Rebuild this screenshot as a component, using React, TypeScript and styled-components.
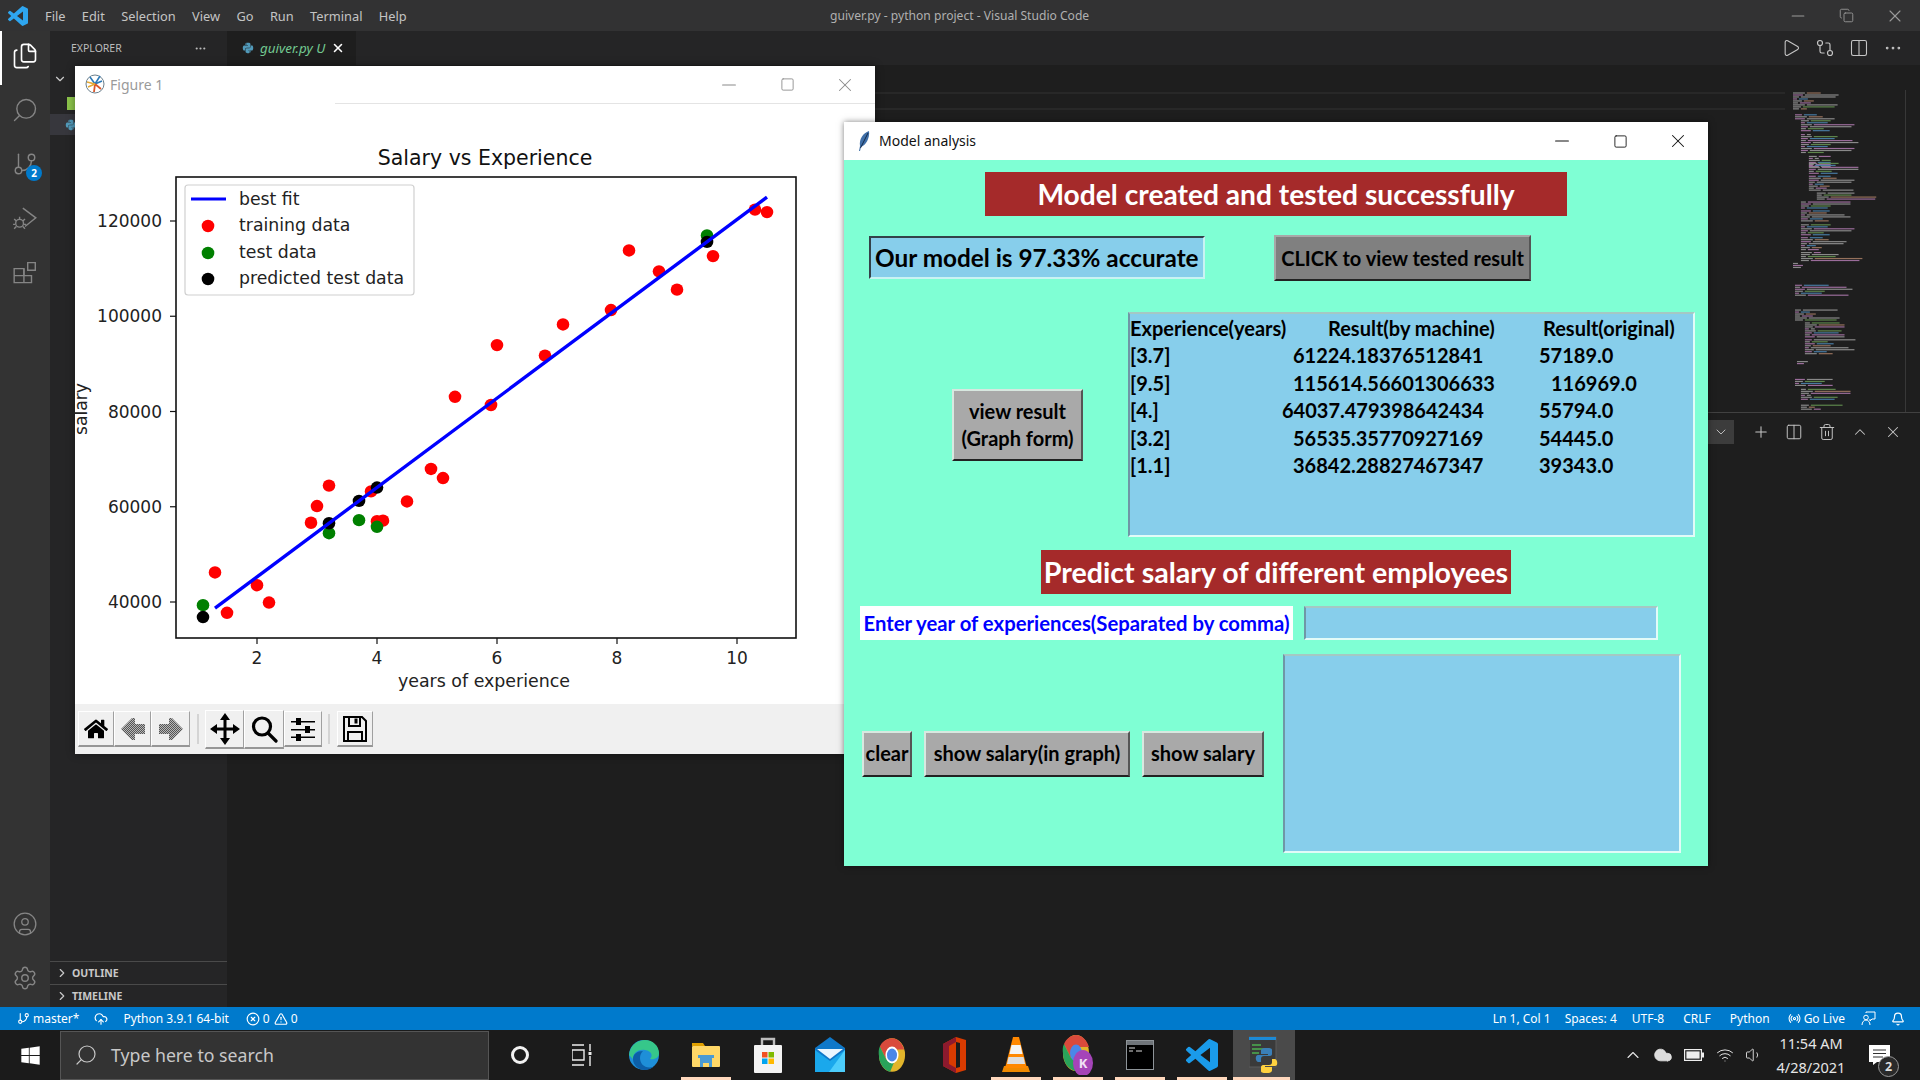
import * as React from 'react'
import styled, { createGlobalStyle } from 'styled-components'
import {
  Files, Search, GitBranch, CircleUser, Settings, Play, GitCompare, Columns2, Ellipsis,
  ChevronDown, ChevronRight, ChevronUp, Plus, Trash2, X, Minus, Square, Copy,
  UploadCloud, CircleX, TriangleAlert, Radio, Bell, Wifi, Volume1, Cloud,
} from 'lucide-react'
import { FaHome, FaPython, FaWindows } from 'react-icons/fa'

const GlobalStyle = createGlobalStyle`
  html, body {
    margin: 0;
    padding: 0;
    background: #1e1e1e;
    overflow: hidden;
  }
  * { box-sizing: border-box; }
`

const UI_FONT = '"Noto Sans", "Open Sans", sans-serif'
const TK_FONT = 'Lato, "Noto Sans", sans-serif'

const Desktop = styled.div`
  position: relative;
  width: 1920px;
  height: 1080px;
  display: flex;
  flex-direction: column;
  overflow: hidden;
  font-family: ${UI_FONT};
  color: #ccc;
`

/* ---------- vs code chrome ---------- */

const TitleBar = styled.div`
  position: relative;
  height: 31px;
  flex: none;
  display: flex;
  align-items: center;
  background: #323233;
`

const AppLogo = styled.svg`
  width: 20px;
  height: 20px;
  margin-left: 8px;
  margin-right: 17px;
`

const Menu = styled.div`
  display: flex;
  gap: 16.4px;
  font-size: 12.8px;
  color: #c4c4c4;
`

const WindowTitle = styled.div`
  position: absolute;
  left: 830px;
  top: 7px;
  font-size: 12.1px;
  color: #b0b0b0;
`

const ChromeControls = styled.div`
  margin-left: auto;
  margin-right: 15px;
  display: flex;
  align-items: center;
  gap: 31px;
  color: #9a9a9a;
`

const Workbench = styled.div`
  flex: 1;
  display: flex;
  min-height: 0;
`

const ActivityBar = styled.div`
  width: 50px;
  flex: none;
  display: flex;
  flex-direction: column;
  align-items: center;
  padding-bottom: 2px;
  background: #333333;
  color: #858585;
`

const ActivityItem = styled.div<{ $active?: boolean }>`
  position: relative;
  width: 50px;
  height: 54px;
  display: flex;
  align-items: ${p => (p.$active ? 'flex-start' : 'center')};
  padding-top: ${p => (p.$active ? 11 : 0)}px;
  justify-content: center;
  color: ${p => (p.$active ? '#fff' : '#858585')};
  border-left: 2px solid ${p => (p.$active ? '#fff' : 'transparent')};
  padding-right: 2px;
`

const ActivityBadge = styled.span`
  position: absolute;
  left: 24px;
  top: 26px;
  width: 16px;
  height: 16px;
  border-radius: 50%;
  background: #007acc;
  color: #fff;
  font-size: 10px;
  font-weight: 700;
  line-height: 16px;
  text-align: center;
`

const ActivitySpacer = styled.div`
  flex: 1;
`

const SideBar = styled.div`
  width: 177px;
  flex: none;
  display: flex;
  flex-direction: column;
  background: #252526;
`

const SideHeader = styled.div`
  height: 34px;
  flex: none;
  display: flex;
  align-items: center;
  justify-content: space-between;
  padding: 0 20px 0 21px;
  font-size: 10.5px;
  color: #bbb;
`

const TreeRow = styled.div<{ $active?: boolean; $top: number }>`
  height: 21px;
  flex: none;
  margin-top: ${p => p.$top}px;
  display: flex;
  align-items: center;
  padding-left: ${p => (p.$active ? 15 : 3)}px;
  background: ${p => (p.$active ? '#37373d' : 'transparent')};
`

const FileChip = styled.span`
  width: 9px;
  height: 13px;
  margin-left: 14px;
  background: #8bc34a;
`

const SideFill = styled.div`
  flex: 1;
`

const SideSection = styled.div`
  height: 23px;
  flex: none;
  display: flex;
  align-items: center;
  gap: 3px;
  padding-left: 5px;
  border-top: 1px solid #4a4a4a;
  font-size: 10.5px;
  font-weight: 700;
  color: #c8c8c8;
`

const EditorArea = styled.div`
  flex: 1;
  display: flex;
  flex-direction: column;
  min-width: 0;
  background: #1e1e1e;
`

const TabStrip = styled.div`
  height: 34px;
  flex: none;
  display: flex;
  background: #252526;
`

const Tab = styled.div`
  width: 129px;
  display: flex;
  align-items: center;
  gap: 6px;
  padding-left: 15px;
  background: #1e1e1e;
  font-size: 13.4px;
  font-style: italic;
  color: #73c991;
  white-space: nowrap;
`

const TabActions = styled.div`
  margin-left: auto;
  margin-right: 17px;
  display: flex;
  align-items: center;
  gap: 14px;
  color: #c5c5c5;
`

const EditorBody = styled.div`
  flex: 1;
  display: flex;
  padding-top: 25px;
`

const CodeColumn = styled.div`
  flex: 1;
  padding-top: 2px;
  padding-right: 8px;
`

const CurrentLine = styled.div`
  height: 18px;
  border-top: 2px solid #282828;
  border-bottom: 2px solid #282828;
`

const MiniMap = styled.svg`
  display: block;
  width: 113px;
  height: 322px;
  flex: none;
  margin-right: 14px;
  border-right: 1px solid #383838;
`

const TerminalPanel = styled.div`
  height: 595px;
  flex: none;
  border-top: 1px solid #414141;
  background: #1e1e1e;
`

const PanelActions = styled.div`
  height: 38px;
  display: flex;
  align-items: center;
  padding-left: 1480px;
  gap: 15px;
  color: #c5c5c5;
`

const PanelSelect = styled.div`
  width: 27px;
  height: 24px;
  margin-right: 3px;
  display: flex;
  align-items: center;
  justify-content: center;
  background: #3c3c3c;
`

const StatusBar = styled.div`
  height: 23px;
  flex: none;
  display: flex;
  align-items: center;
  padding-left: 17px;
  background: #007acc;
  color: #fff;
  font-size: 12px;
`

const StatusItem = styled.span<{ $gap?: number }>`
  display: inline-flex;
  align-items: center;
  gap: 3px;
  margin-right: ${p => p.$gap ?? 0}px;
  white-space: nowrap;
`

const StatusRight = styled.div`
  margin-left: auto;
  display: flex;
  align-items: center;
  padding-right: 15px;
`

/* ---------- task bar ---------- */

const TaskBar = styled.div`
  height: 50px;
  flex: none;
  display: flex;
  background: #1b1b1b;
`

const StartButton = styled.div`
  width: 60px;
  display: flex;
  align-items: center;
  justify-content: center;
  color: #fff;
`

const SearchBox = styled.div`
  width: 429px;
  margin-top: 1px;
  display: flex;
  align-items: center;
  gap: 13px;
  padding: 0 0 2px 13px;
  background: #333;
  border: 1px solid #555;
  font-size: 17.7px;
  color: #c8c8c8;
`

const TaskItem = styled.div<{ $open?: boolean; $active?: boolean }>`
  position: relative;
  width: 62px;
  display: flex;
  align-items: center;
  justify-content: center;
  color: #fff;
  background: ${p => (p.$active ? '#4a4a4a' : 'transparent')};
  &::after {
    content: '';
    display: ${p => (p.$open ? 'block' : 'none')};
    position: absolute;
    left: ${p => (p.$active ? 0 : 6)}px;
    right: ${p => (p.$active ? 5 : 6)}px;
    bottom: 0;
    height: 3px;
    background: #ffd8bd;
  }
`

const Tray = styled.div`
  margin-left: auto;
  display: flex;
  align-items: center;
  color: #e6e6e6;
`

const TrayIcon = styled.div<{ $w: number }>`
  width: ${p => p.$w}px;
  display: flex;
  justify-content: center;
`

const Clock = styled.div`
  width: 86px;
  text-align: center;
  font-size: 14.5px;
  line-height: 24px;
  color: #e6e6e6;
  white-space: nowrap;
`

const Notifications = styled.div`
  position: relative;
  width: 66px;
  padding-left: 15px;
  display: flex;
`

const NotifyCount = styled.span`
  position: absolute;
  left: 24px;
  top: 11px;
  width: 21px;
  height: 21px;
  border-radius: 50%;
  border: 1px solid #999;
  background: #2a2a2a;
  color: #ddd;
  font-size: 12.5px;
  font-weight: 700;
  line-height: 19px;
  text-align: center;
`

/* ---------- shared window parts ---------- */

const ControlGroup = styled.div<{ $dim?: boolean }>`
  display: flex;
  margin-left: auto;
  padding-right: 1px;
  color: ${p => (p.$dim ? '#8a8a8a' : '#111')};
`

const ControlCell = styled.div`
  width: 58px;
  display: flex;
  align-items: center;
  justify-content: center;
`

const WindowControls = ({ dim }: { dim?: boolean }) => (
  <ControlGroup $dim={dim}>
    <ControlCell><Minus size={22} strokeWidth={1.1} /></ControlCell>
    <ControlCell><Square size={15} strokeWidth={1.4} /></ControlCell>
    <ControlCell><X size={22} strokeWidth={1.1} /></ControlCell>
  </ControlGroup>
)

/* ---------- figure window ---------- */

const FigureWindow = styled.div`
  position: absolute;
  left: 75px;
  top: 66px;
  width: 800px;
  height: 688px;
  display: flex;
  flex-direction: column;
  background: #fff;
  box-shadow: 0 0 8px rgba(0, 0, 0, 0.4);
`

const FigureHead = styled.div`
  height: 38px;
  flex: none;
  display: flex;
`

const FigureHeadLeft = styled.div`
  width: 260px;
  display: flex;
  align-items: center;
  gap: 5px;
  padding: 0 0 2px 10px;
  font-size: 14px;
  color: #9a9a9a;
`

const FigureHeadRight = styled.div`
  flex: 1;
  display: flex;
  border-bottom: 1px solid #e4e4e4;
`

const ChartSvg = styled.svg`
  display: block;
  width: 800px;
  height: 600px;
  flex: none;
  font-family: "DejaVu Sans", sans-serif;
  overflow: visible;
`

const FigureToolbar = styled.div`
  flex: 1;
  display: flex;
  align-items: center;
  padding-left: 3px;
  background: #f0f0f0;
`

const ToolButton = styled.div<{ $w: number; $tall?: boolean; $after?: number }>`
  width: ${p => p.$w}px;
  height: ${p => (p.$tall ? 39 : 36)}px;
  margin-right: ${p => p.$after ?? 0}px;
  display: flex;
  align-items: center;
  justify-content: center;
  background: #f0f0f0;
  border-top: 1px solid #fff;
  border-left: 1px solid #fff;
  border-right: 1px solid #a0a0a0;
  border-bottom: 2px solid #969696;
  color: #000;
`

const ToolSep = styled.div<{ $after: number; $before: number }>`
  width: 2px;
  height: 30px;
  margin: 0 ${p => p.$after}px 0 ${p => p.$before}px;
  background: #d4d4d4;
`

/* ---------- model window ---------- */

const ModelWindow = styled.div`
  position: absolute;
  left: 844px;
  top: 122px;
  width: 864px;
  height: 744px;
  display: flex;
  flex-direction: column;
  box-shadow: 0 0 6px rgba(0, 0, 0, 0.5);
`

const ModelHead = styled.div`
  height: 38px;
  flex: none;
  display: flex;
  align-items: stretch;
  background: #fff;
  color: #111;
  font-size: 14px;
`

const ModelHeadTitle = styled.div`
  display: flex;
  align-items: center;
  gap: 8px;
  padding: 0 0 1px 13px;
`

const ModelBody = styled.div`
  flex: 1;
  display: flex;
  flex-direction: column;
  padding-top: 12px;
  background: #7fffd4;
  font-family: ${TK_FONT};
  font-weight: 700;
  color: #000;
`

const Banner = styled.div<{ $w: number; $top?: number; $size: number }>`
  width: ${p => p.$w}px;
  height: 44px;
  margin: ${p => p.$top ?? 0}px auto 0;
  display: flex;
  align-items: center;
  justify-content: center;
  background: #a52a2a;
  color: #fff;
  font-size: ${p => p.$size}px;
  white-space: nowrap;
`

const AccuracyRow = styled.div`
  display: flex;
  align-items: flex-start;
  margin-top: 19px;
  padding-left: 25px;
`

const AccuracyLabel = styled.div`
  width: 336px;
  height: 43px;
  margin-top: 1px;
  display: flex;
  align-items: center;
  padding-left: 4px;
  background: #87ceeb;
  border-top: 2px solid #33424a;
  border-left: 2px solid #33424a;
  border-bottom: 2px solid #c9f3f3;
  border-right: 2px solid #c9f3f3;
  font-size: 24.3px;
  white-space: nowrap;
`

const TkButton = styled.div<{ $w: number; $h: number; $bg?: string; $size?: number }>`
  width: ${p => p.$w}px;
  height: ${p => p.$h}px;
  flex: none;
  display: flex;
  align-items: center;
  justify-content: center;
  text-align: center;
  white-space: nowrap;
  background: ${p => p.$bg ?? '#a9a9a9'};
  border-top: 2px solid #d8e8e0;
  border-left: 2px solid #d8e8e0;
  border-right: 2px solid #555;
  border-bottom: 2px solid #222;
  font-size: ${p => p.$size ?? 20}px;
  line-height: 27px;
`

const AccuracyButton = styled(TkButton)`
  margin-left: 69px;
  border-top-color: #a8a8a8;
  border-left-color: #a8a8a8;
`

const ResultRow = styled.div`
  display: flex;
  align-items: center;
  margin-top: 31px;
  padding-left: 108px;
  gap: 45px;
`

const SunkenBox = styled.div<{ $w: number; $h: number }>`
  width: ${p => p.$w}px;
  height: ${p => p.$h}px;
  flex: none;
  background: #87ceeb;
  border-top: 2px solid #a5c8c4;
  border-left: 2px solid #6f97a6;
  border-bottom: 2px solid #e2fbf8;
  border-right: 2px solid #e2fbf8;
`

const ResultsPanel = styled(SunkenBox)`
  padding-top: 1px;
  font-size: 20px;
`

const ResultLine = styled.div`
  display: grid;
  grid-template-columns: 152px 257px 1fr;
  height: 27.4px;
  line-height: 27.4px;
  white-space: nowrap;
`

const Cell = styled.span<{ $indent?: number }>`
  padding-left: ${p => p.$indent ?? 0}px;
`

const EntryRow = styled.div`
  display: flex;
  margin-top: 12px;
  padding-left: 16px;
`

const EntryLabel = styled.div`
  width: 433px;
  height: 34px;
  display: flex;
  align-items: center;
  justify-content: center;
  background: #fff;
  color: #0000ff;
  font-size: 20.3px;
  white-space: nowrap;
`

const EntryField = styled(SunkenBox)`
  margin-left: 11px;
`

const ActionRow = styled.div`
  display: flex;
  align-items: center;
  margin-top: 14px;
  padding-left: 18px;
  gap: 12px;
`

const OutputBox = styled(SunkenBox)`
  margin-left: 7px;
`

/* ---------- chart ---------- */

const px = (v: number) => 182 + (v - 2) * 60
const py = (s: number) => 498 - ((s - 40000) / 20000) * 95.25

const TRAIN: [number, number][] = [
  [1.3, 46205], [1.5, 37731], [2.0, 43525], [2.2, 39891], [2.9, 56642], [3.0, 60150], [3.2, 64445],
  [3.9, 63218], [4.0, 56957], [4.1, 57081], [4.5, 61111], [4.9, 67938], [5.1, 66029], [5.3, 83088],
  [5.9, 81363], [6.0, 93940], [6.8, 91738], [7.1, 98273], [7.9, 101302], [8.2, 113812], [8.7, 109431],
  [9.0, 105582], [9.6, 112635], [10.3, 122391], [10.5, 121872],
]
const TEST: [number, number][] = [[3.7, 57189], [9.5, 116969], [4.0, 55794], [3.2, 54445], [1.1, 39343]]
const PREDICTED: [number, number][] = [
  [3.7, 61224.18], [9.5, 115614.56], [4.0, 64037.48], [3.2, 56535.36], [1.1, 36842.29],
]

const Dots = ({ data, fill }: { data: [number, number][]; fill: string }) => (
  <>
    {data.map(([x, y]) => (
      <ellipse key={`${x}-${y}`} cx={px(x)} cy={py(y)} rx={6.3} ry={6.2} fill={fill} />
    ))}
  </>
)

const LEGEND: [string, string | null, number][] = [
  ['best fit', null, 95],
  ['training data', '#ff0000', 121],
  ['test data', '#008000', 148],
  ['predicted test data', '#000', 174],
]

const SalaryChart = () => (
  <ChartSvg viewBox="0 0 800 600">
    <text x={410} y={61} fontSize={20.5} textAnchor="middle" fill="#111">Salary vs Experience</text>
    <rect x={101} y={73} width={620} height={461} fill="#fff" stroke="#111" strokeWidth={1.6} />

    {[120000, 100000, 80000, 60000, 40000].map(s => (
      <g key={s}>
        <line x1={95} x2={101} y1={py(s)} y2={py(s)} stroke="#111" strokeWidth={1.2} />
        <text x={87} y={py(s) + 6} fontSize={17} textAnchor="end" fill="#222">{s}</text>
      </g>
    ))}
    {[2, 4, 6, 8, 10].map(v => (
      <g key={v}>
        <line x1={px(v)} x2={px(v)} y1={534} y2={540} stroke="#111" strokeWidth={1.2} />
        <text x={px(v)} y={560} fontSize={17} textAnchor="middle" fill="#222">{v}</text>
      </g>
    ))}
    <text x={409} y={583} fontSize={17.4} textAnchor="middle" fill="#222">years of experience</text>
    <text x={12} y={305} fontSize={17.2} textAnchor="middle" fill="#222" transform="rotate(-90 12 305)">salary</text>

    <Dots data={TRAIN} fill="#ff0000" />
    <Dots data={TEST} fill="#008000" />
    <Dots data={PREDICTED} fill="#000" />
    <line x1={px(1.3)} y1={py(38717)} x2={px(10.5)} y2={py(125000)} stroke="#0000ff" strokeWidth={3.4} />

    <rect x={110} y={81} width={229} height={110} rx={3} fill="#fff" fillOpacity={0.85} stroke="#d0d0d0" strokeWidth={1.2} />
    {LEGEND.map(([label, color, y]) => (
      <g key={label}>
        {color
          ? <ellipse cx={133} cy={y + 1} rx={6.3} ry={6.2} fill={color} />
          : <line x1={116} x2={151} y1={y} y2={y} stroke="#0000ff" strokeWidth={3} />}
        <text x={164} y={y + 6} fontSize={17.3} fill="#222">{label}</text>
      </g>
    ))}
  </ChartSvg>
)

/* ---------- minimap ---------- */

const MINI_BLOCKS: [number, number, number, number][] = [
  [1, 18, 0, 48], [23, 28, 2, 40], [29, 40, 8, 104], [43, 62, 8, 90], [65, 76, 16, 22], [72, 84, 16, 50],
  [85, 100, 16, 48], [102, 110, 24, 60], [111, 118, 8, 50], [120, 132, 8, 104], [134, 146, 8, 104],
  [147, 160, 8, 104], [162, 172, 8, 104], [173, 178, 0, 6], [195, 206, 2, 75], [220, 232, 2, 45],
  [233, 248, 12, 40], [250, 266, 12, 70], [272, 276, 4, 6], [290, 298, 2, 38], [300, 312, 8, 50], [316, 321, 8, 60],
]
const MINI_COLORS = ['#9c9c9c', '#b07ab0', '#a97f66', '#4f8ab8', '#6a9955', '#9c9c9c']

const Minimap = () => (
  <MiniMap viewBox="0 0 113 322">
    {MINI_BLOCKS.flatMap(([from, to, indent, len], b) => {
      const rows = []
      for (let y = from; y < to; y += 2) {
        const seed = (y * 37 + b * 11) % 29
        const first = 4 + (seed % 9)
        const second = Math.min(len - first - 2, 4 + ((seed * 7) % 46))
        rows.push(
          <g key={`${b}-${y}`} opacity={0.85}>
            <rect x={indent} y={y} width={first} height={1.2} fill={MINI_COLORS[seed % 3 === 0 ? 1 : 0]} />
            {second > 0 && <rect x={indent + first + 2} y={y} width={second} height={1.2} fill={MINI_COLORS[seed % 6]} />}
          </g>,
        )
      }
      return rows
    })}
  </MiniMap>
)

/* ---------- small drawings ---------- */

const VS_PATH = 'M23.15 2.587L18.21.21a1.494 1.494 0 0 0-1.705.29l-9.46 8.63-4.12-3.128a.999.999 0 0 0-1.276.057L.327 7.261A1 1 0 0 0 .326 8.74L3.899 12 .326 15.26a1 1 0 0 0 .001 1.479L1.65 17.94a.999.999 0 0 0 1.276.057l4.12-3.128 9.46 8.63a1.492 1.492 0 0 0 1.704.29l4.942-2.377A1.5 1.5 0 0 0 24 20.06V3.939a1.5 1.5 0 0 0-.85-1.352zm-5.146 14.861L10.826 12l7.178-5.448v10.896z'

const VsLogo = ({ size, color }: { size: number; color: string }) => (
  <svg width={size} height={size} viewBox="0 0 24 24"><path d={VS_PATH} fill={color} /></svg>
)

const DebugIcon = () => (
  <svg width="26" height="26" viewBox="0 0 24 24" fill="none" stroke="currentColor" strokeWidth="1.3">
    <path d="M10 1l12 9-10 8" />
    <circle cx="7" cy="15" r="3.6" />
    <path d="M7 9v2M2 11l2 2M12 11l-2 2M1 16h2M11 16h2M2 20l2-2M12 20l-2-2" />
  </svg>
)

const ExtensionsIcon = () => (
  <svg width="26" height="26" viewBox="0 0 24 24" fill="none" stroke="currentColor" strokeWidth="1.3">
    <path d="M2 7h9v13H2zM2 13.5h16V20h-7" />
    <path d="M11 7v6.5M14.5 1.5h7v7h-7z" />
  </svg>
)

const FeedbackIcon = () => (
  <svg width="15" height="15" viewBox="0 0 15 15" fill="none" stroke="#fff" strokeWidth="1">
    <path d="M5 2V1h9v7h-3l-2 2V8" />
    <circle cx="5" cy="6.5" r="2.3" />
    <path d="M1 14c0-3 2-5 4-5s4 2 4 5" />
  </svg>
)

const MplLogo = () => (
  <svg width="20" height="20" viewBox="0 0 20 20">
    <circle cx="10" cy="10" r="9" fill="#fff" stroke="#6b7f8c" strokeWidth="1" />
    <path d="M10 10L5 3M10 10L15 2M10 10l7-3" stroke="#2d7ab8" strokeWidth="1.6" />
    <path d="M10 10l6 5M10 10l-1 8" stroke="#d9572b" strokeWidth="1.8" />
    <path d="M10 10L3 13M10 10L2 8" stroke="#e5a832" strokeWidth="1.4" />
  </svg>
)

const Feather = () => (
  <svg width="14" height="20" viewBox="0 0 14 20">
    <path d="M12 0C6 2 2 8 3 15l-1 5 1 0 1-4C9 14 13 7 12 0z" fill="#3f6fa8" />
    <path d="M11 2L3.5 17" stroke="#10233f" strokeWidth="0.9" />
  </svg>
)

const DitherArrow = ({ id, flip }: { id: string; flip?: boolean }) => (
  <svg width="26" height="24" viewBox="0 0 26 24" style={{ transform: flip ? 'scaleX(-1)' : undefined }}>
    <defs>
      <pattern id={id} width="2" height="2" patternUnits="userSpaceOnUse">
        <rect width="2" height="2" fill="#b8b8b8" />
        <rect width="1" height="1" fill="#555" />
        <rect x="1" y="1" width="1" height="1" fill="#555" />
      </pattern>
    </defs>
    <path d="M1 12L12 1h3v6h10v10H15v6h-3z" fill={`url(#${id})`} />
  </svg>
)

const MoveGlyph = () => (
  <svg width="30" height="32" viewBox="0 0 30 32" fill="#000">
    <path d="M13.5 5h3v22h-3zM4 14.5h22v3H4z" />
    <path d="M15 0l5 7H10zM15 32l5-7H10zM0 16l7-5v10zM30 16l-7-5v10z" />
  </svg>
)

const SlidersGlyph = () => (
  <svg width="26" height="26" viewBox="0 0 26 26" fill="#000">
    <path d="M1 5h24v1.6H1zM1 13h24v1.6H1zM1 20.5h24v1.6H1z" />
    <rect x="6" y="2" width="5" height="7" />
    <rect x="15" y="10" width="5" height="7" />
    <rect x="6" y="18" width="5" height="7" />
  </svg>
)

const SaveGlyph = () => (
  <svg width="26" height="28" viewBox="0 0 26 28" fill="none" stroke="#000" strokeWidth="2">
    <path d="M2 2h18l4 4v20H2z" />
    <path d="M7 2v9h11V2" />
    <rect x="12.5" y="3.5" width="3" height="5" fill="#000" stroke="none" />
    <path d="M6 26v-9h14v9" />
  </svg>
)

const SearchGlyph = () => (
  <svg width="28" height="28" viewBox="0 0 28 28" fill="none" stroke="#000" strokeWidth="3.2">
    <circle cx="12" cy="11.5" r="8.5" />
    <path d="M18 18l8 8" strokeLinecap="round" />
  </svg>
)

const EdgeIcon = () => (
  <svg width="32" height="32" viewBox="0 0 32 32">
    <circle cx="16" cy="16" r="15" fill="#1e8fd8" />
    <path d="M1 16C2 6 10 1 17 1c8 0 14 6 14 13 0 5-5 7-9 6 3-3 2-8-5-9C9 10 5 15 5 20z" fill="#36c78a" />
    <path d="M5 20c0 6 5 11 12 11 3 0 6-1 8-3-8 2-13-3-13-9 0-3 1-5 3-7-6 0-10 3-10 8z" fill="#0c5fa8" />
  </svg>
)

const FolderIcon = () => (
  <svg width="28" height="30" viewBox="0 0 28 30">
    <path d="M0 3h11l2 3H0z" fill="#e0a000" />
    <rect x="0" y="6" width="28" height="21" rx="1" fill="#ffd767" />
    <path d="M8 27v-9h12v9h-3v-4h-6v4z" fill="#4a9ad4" />
    <rect x="6" y="15" width="16" height="3" fill="#4a9ad4" />
  </svg>
)

const StoreIcon = () => (
  <svg width="30" height="38" viewBox="0 0 30 38">
    <path d="M9 10V3h12v7" fill="none" stroke="#bdbdbd" strokeWidth="2.4" />
    <rect x="1" y="9" width="28" height="28" rx="1" fill="#f3f3f3" />
    <rect x="9" y="16" width="5.5" height="5.5" fill="#f25022" />
    <rect x="15.5" y="16" width="5.5" height="5.5" fill="#7fba00" />
    <rect x="9" y="22.5" width="5.5" height="5.5" fill="#00a4ef" />
    <rect x="15.5" y="22.5" width="5.5" height="5.5" fill="#ffb900" />
  </svg>
)

const MailIcon = () => (
  <svg width="30" height="36" viewBox="0 0 30 36">
    <path d="M0 11L15 0l15 11v24H0z" fill="#0f78c9" />
    <path d="M2 12h26L15 22z" fill="#eaf6ff" />
    <path d="M0 13l15 11 15-11v22H0z" fill="#1aa8ec" />
    <path d="M30 13v22H14z" fill="#4ccdfb" />
  </svg>
)

const ChromeIcon = () => (
  <svg width="28" height="36" viewBox="0 0 30 36">
    <ellipse cx="15" cy="18" rx="14" ry="18" fill="#e2b52b" />
    <path d="M15 0C9 0 4 4 2 9l7 14 6-11h13C26 5 21 0 15 0z" fill="#d94a3c" />
    <path d="M2 9C0 13 1 18 1 18c0 9 5 16 12 18l5-12-9-1z" fill="#29a35a" />
    <ellipse cx="15" cy="18" rx="7" ry="9" fill="#fff" />
    <ellipse cx="15" cy="18" rx="5.4" ry="7" fill="#4a87e8" />
  </svg>
)

const ChromeProfileIcon = () => (
  <svg width="32" height="40" viewBox="0 0 32 40">
    <ellipse cx="14" cy="18" rx="13" ry="18" fill="#e2b52b" />
    <path d="M14 0C9 0 4 4 2 9l7 14 5-11h13C25 5 20 0 14 0z" fill="#d94a3c" />
    <path d="M2 9C0 13 1 18 1 18c0 9 5 16 12 18l5-12-9-1z" fill="#29a35a" />
    <ellipse cx="14" cy="18" rx="6" ry="8.5" fill="#4a87e8" />
    <ellipse cx="21" cy="28" rx="10" ry="13" fill="#a544b8" />
    <text x="21" y="33" textAnchor="middle" fontSize="13" fontWeight="700" fill="#f1e0f5" fontFamily="Noto Sans, sans-serif">K</text>
  </svg>
)

const OfficeIcon = () => (
  <svg width="24" height="36" viewBox="0 0 24 36">
    <path d="M14 0l10 3v30l-10 3L1 29V7z" fill="#d83b01" />
    <path d="M1 7l13-7v5L7 9v18l7 4v5L1 29z" fill="#8c1a2e" />
    <path d="M14 5l4 1v24l-4 1z" fill="#1b1b1b" />
  </svg>
)

const VlcIcon = () => (
  <svg width="28" height="36" viewBox="0 0 28 36">
    <path d="M2 29h24l2 6H0z" fill="#f08a00" />
    <path d="M11 0h6l8 31H3z" fill="#ff8800" />
    <path d="M9.5 8h9l2 9h-13z" fill="#f4f4f4" />
    <path d="M6.5 20h15l1.6 7H5z" fill="#dedede" />
  </svg>
)

const TerminalIcon = () => (
  <svg width="28" height="30" viewBox="0 0 28 30">
    <rect x="0.5" y="0.5" width="27" height="29" fill="#000" stroke="#8e9499" />
    <rect x="1" y="1" width="26" height="4" fill="#6f7479" />
    <path d="M3 8h6M3 11h4M10 11h6" stroke="#ddd" strokeWidth="1" />
  </svg>
)

const PythonAppIcon = () => (
  <svg width="30" height="38" viewBox="0 0 30 38">
    <rect x="0" y="1" width="27" height="30" fill="#3a3a3a" stroke="#5a5a5a" />
    <rect x="0" y="1" width="27" height="3" fill="#1c8ad6" />
    <path d="M3 9h9M3 13h12M3 17h7" stroke="#4caf50" strokeWidth="1.4" />
    <path d="M17 12c-5 0-5 2-5 3v3h7v1H9c-3 0-3 6 0 7h3v-3c0-2 1-3 3-3h6c1 0 2-1 2-2v-4c0-2-3-2-6-2z" fill="#3a7fb8" />
    <path d="M18 37c5 0 5-2 5-3v-3h-7v-1h10c3 0 3-6 0-7h-3v3c0 2-1 3-3 3h-6c-1 0-2 1-2 2v4c0 2 3 2 6 2z" fill="#ffd23f" />
  </svg>
)

const TaskViewIcon = () => (
  <svg width="20" height="22" viewBox="0 0 20 22" fill="none" stroke="#eee" strokeWidth="1.4">
    <path d="M0 1h12M0 21h12M0 6h12v10H0zM18 0v7M18 12v10" />
    <rect x="16.5" y="8" width="3" height="3" fill="#eee" stroke="none" />
  </svg>
)

const BatteryIcon = () => (
  <svg width="20" height="12" viewBox="0 0 20 12">
    <rect x="0.6" y="0.6" width="16.8" height="10.8" fill="none" stroke="#eee" strokeWidth="1.2" />
    <rect x="2.4" y="2.4" width="13.2" height="7.2" fill="#eee" />
    <rect x="18" y="3.5" width="2" height="5" fill="#eee" />
  </svg>
)

const NotifyBubble = () => (
  <svg width="21" height="20" viewBox="0 0 21 20">
    <path d="M0 0h21v17H8l-4 3v-3H0z" fill="#fff" />
    <path d="M4 5h13M4 8.5h13M4 12h10" stroke="#333" strokeWidth="1.1" />
  </svg>
)

const CortanaRing = styled.div`
  width: 18px;
  height: 18px;
  border-radius: 50%;
  border: 3px solid #f2f2f2;
`

/* ---------- data ---------- */

const RESULT_ROWS: [string, string, number, string, number][] = [
  ['Experience(years)', 'Result(by machine)', 46, 'Result(original)', 4],
  ['[3.7]', '61224.18376512841', 11, '57189.0', 0],
  ['[9.5]', '115614.56601306633', 11, '116969.0', 12],
  ['[4.]', '64037.479398642434', 0, '55794.0', 0],
  ['[3.2]', '56535.35770927169', 11, '54445.0', 0],
  ['[1.1]', '36842.28827467347', 11, '39343.0', 0],
]

const App = () => (
  <Desktop>
    <GlobalStyle />

    <TitleBar>
      <AppLogo viewBox="0 0 24 24"><path d={VS_PATH} fill="#2ea6f0" /></AppLogo>
      <Menu>
        <span>File</span><span>Edit</span><span>Selection</span><span>View</span>
        <span>Go</span><span>Run</span><span>Terminal</span><span>Help</span>
      </Menu>
      <WindowTitle>guiver.py - python project - Visual Studio Code</WindowTitle>
      <ChromeControls>
        <Minus size={20} strokeWidth={1.3} />
        <Copy size={15} strokeWidth={1.4} />
        <X size={20} strokeWidth={1.3} />
      </ChromeControls>
    </TitleBar>

    <Workbench>
      <ActivityBar>
        <ActivityItem $active><Files size={28} strokeWidth={1.4} /></ActivityItem>
        <ActivityItem><Search size={28} strokeWidth={1.2} style={{ transform: 'scaleX(-1)', marginTop: -4 }} /></ActivityItem>
        <ActivityItem style={{ paddingBottom: 4 }}>
          <GitBranch size={26} strokeWidth={1.3} />
          <ActivityBadge>2</ActivityBadge>
        </ActivityItem>
        <ActivityItem><DebugIcon /></ActivityItem>
        <ActivityItem><ExtensionsIcon /></ActivityItem>
        <ActivitySpacer />
        <ActivityItem><CircleUser size={26} strokeWidth={1.2} /></ActivityItem>
        <ActivityItem><Settings size={26} strokeWidth={1.3} /></ActivityItem>
      </ActivityBar>

      <SideBar>
        <SideHeader>
          <span>EXPLORER</span>
          <Ellipsis size={13} />
        </SideHeader>
        <TreeRow $top={3}><ChevronDown size={14} /></TreeRow>
        <TreeRow $top={4}><FileChip /></TreeRow>
        <TreeRow $top={0} $active><FaPython size={12} color="#519aba" /></TreeRow>
        <SideFill />
        <SideSection><ChevronRight size={14} /> OUTLINE</SideSection>
        <SideSection><ChevronRight size={14} /> TIMELINE</SideSection>
      </SideBar>

      <EditorArea>
        <TabStrip>
          <Tab>
            <FaPython size={12} color="#519aba" />
            <span>guiver.py U</span>
            <X size={14} color="#fff" strokeWidth={2.6} />
          </Tab>
          <TabActions>
            <Play size={20} strokeWidth={1.3} />
            <GitCompare size={20} strokeWidth={1.4} />
            <Columns2 size={20} strokeWidth={1.3} />
            <Ellipsis size={20} strokeWidth={1.3} />
          </TabActions>
        </TabStrip>
        <EditorBody>
          <CodeColumn><CurrentLine /></CodeColumn>
          <Minimap />
        </EditorBody>
        <TerminalPanel>
          <PanelActions>
            <PanelSelect><ChevronDown size={16} strokeWidth={1.4} /></PanelSelect>
            <Plus size={18} strokeWidth={1.4} />
            <Columns2 size={18} strokeWidth={1.3} />
            <Trash2 size={18} strokeWidth={1.3} />
            <ChevronUp size={18} strokeWidth={1.4} />
            <X size={18} strokeWidth={1.4} />
          </PanelActions>
        </TerminalPanel>
      </EditorArea>
    </Workbench>

    <StatusBar>
      <StatusItem $gap={15}><GitBranch size={13} /> master*</StatusItem>
      <StatusItem $gap={15}><UploadCloud size={14} /></StatusItem>
      <StatusItem $gap={17}>Python 3.9.1 64-bit</StatusItem>
      <StatusItem $gap={4}><CircleX size={14} /> 0</StatusItem>
      <StatusItem><TriangleAlert size={14} /> 0</StatusItem>
      <StatusRight>
        <StatusItem $gap={14}>Ln 1, Col 1</StatusItem>
        <StatusItem $gap={15}>Spaces: 4</StatusItem>
        <StatusItem $gap={19}>UTF-8</StatusItem>
        <StatusItem $gap={19}>CRLF</StatusItem>
        <StatusItem $gap={18}>Python</StatusItem>
        <StatusItem $gap={16}><Radio size={13} /> Go Live</StatusItem>
        <StatusItem $gap={15}><FeedbackIcon /></StatusItem>
        <StatusItem><Bell size={14} /></StatusItem>
      </StatusRight>
    </StatusBar>

    <TaskBar>
      <StartButton><FaWindows size={21} /></StartButton>
      <SearchBox>
        <Search size={24} strokeWidth={1.2} style={{ transform: 'scaleX(-1)' }} />
        <span>Type here to search</span>
      </SearchBox>
      <TaskItem><CortanaRing /></TaskItem>
      <TaskItem><TaskViewIcon /></TaskItem>
      <TaskItem><EdgeIcon /></TaskItem>
      <TaskItem $open><FolderIcon /></TaskItem>
      <TaskItem><StoreIcon /></TaskItem>
      <TaskItem><MailIcon /></TaskItem>
      <TaskItem><ChromeIcon /></TaskItem>
      <TaskItem><OfficeIcon /></TaskItem>
      <TaskItem $open><VlcIcon /></TaskItem>
      <TaskItem $open><ChromeProfileIcon /></TaskItem>
      <TaskItem $open><TerminalIcon /></TaskItem>
      <TaskItem $open><VsLogo size={32} color="#1a9bea" /></TaskItem>
      <TaskItem $open $active><PythonAppIcon /></TaskItem>
      <Tray>
        <TrayIcon $w={30}><ChevronUp size={20} strokeWidth={1.3} /></TrayIcon>
        <TrayIcon $w={30}><Cloud size={20} fill="#ddd" strokeWidth={1} /></TrayIcon>
        <TrayIcon $w={32}><BatteryIcon /></TrayIcon>
        <TrayIcon $w={30}><Wifi size={18} strokeWidth={1.3} /></TrayIcon>
        <TrayIcon $w={28}><Volume1 size={18} strokeWidth={1.2} /></TrayIcon>
        <Clock>11:54 AM<br />4/28/2021</Clock>
        <Notifications>
          <NotifyBubble />
          <NotifyCount>2</NotifyCount>
        </Notifications>
      </Tray>
    </TaskBar>

    <FigureWindow>
      <FigureHead>
        <FigureHeadLeft><MplLogo /> Figure 1</FigureHeadLeft>
        <FigureHeadRight><WindowControls dim /></FigureHeadRight>
      </FigureHead>
      <SalaryChart />
      <FigureToolbar>
        <ToolButton $w={36}><FaHome size={24} /></ToolButton>
        <ToolButton $w={37}><DitherArrow id="dither-back" /></ToolButton>
        <ToolButton $w={39}><DitherArrow id="dither-forward" flip /></ToolButton>
        <ToolSep $before={7} $after={6} />
        <ToolButton $w={39} $tall><MoveGlyph /></ToolButton>
        <ToolButton $w={40} $tall><SearchGlyph /></ToolButton>
        <ToolButton $w={38}><SlidersGlyph /></ToolButton>
        <ToolSep $before={6} $after={7} />
        <ToolButton $w={36}><SaveGlyph /></ToolButton>
      </FigureToolbar>
    </FigureWindow>

    <ModelWindow>
      <ModelHead>
        <ModelHeadTitle><Feather /> Model analysis</ModelHeadTitle>
        <WindowControls />
      </ModelHead>
      <ModelBody>
        <Banner $w={582} $size={28.2}>Model created and tested successfully</Banner>
        <AccuracyRow>
          <AccuracyLabel>Our model is 97.33% accurate</AccuracyLabel>
          <AccuracyButton $w={257} $h={46} $bg="#808080">CLICK to view tested result</AccuracyButton>
        </AccuracyRow>
        <ResultRow>
          <TkButton $w={131} $h={72}>view result<br />(Graph form)</TkButton>
          <ResultsPanel $w={567} $h={225}>
            {RESULT_ROWS.map(([a, b, bi, c, ci]) => (
              <ResultLine key={a}>
                <Cell>{a}</Cell>
                <Cell $indent={bi}>{b}</Cell>
                <Cell $indent={ci}>{c}</Cell>
              </ResultLine>
            ))}
          </ResultsPanel>
        </ResultRow>
        <Banner $w={470} $top={13} $size={28.6}>Predict salary of different employees</Banner>
        <EntryRow>
          <EntryLabel>Enter year of experiences(Separated by comma)</EntryLabel>
          <EntryField $w={354} $h={34} />
        </EntryRow>
        <ActionRow>
          <TkButton $w={50} $h={46}>clear</TkButton>
          <TkButton $w={206} $h={46}>show salary(in graph)</TkButton>
          <TkButton $w={122} $h={46}>show salary</TkButton>
          <OutputBox $w={398} $h={199} />
        </ActionRow>
      </ModelBody>
    </ModelWindow>
  </Desktop>
)

export default App
